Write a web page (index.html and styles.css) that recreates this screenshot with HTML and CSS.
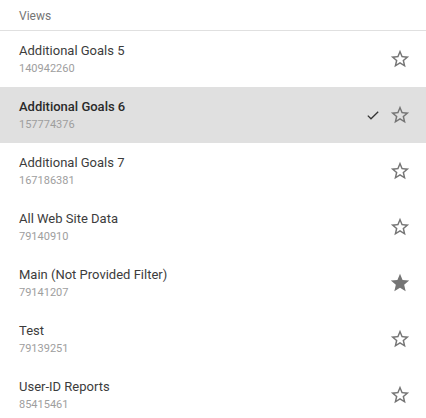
FILE: index.html
```html
<!DOCTYPE html>
<html>
<head>
<meta charset="utf-8">
<link rel="stylesheet" href="styles.css">
</head>
<body>
<div class="panel">
  <div class="header">Views</div>
  <ul class="list">
    <li class="row">
      <div class="text"><div class="title">Additional Goals 5</div><div class="sub">140942260</div></div>
      <svg class="star" viewBox="0 0 24 24"><path d="M22 9.24l-7.19-.62L12 2 9.19 8.63 2 9.24l5.46 4.73L5.82 21 12 17.27 18.18 21l-1.63-7.03L22 9.24zM12 15.4l-3.76 2.27 1-4.28-3.32-2.88 4.38-.38L12 6.1l1.71 4.04 4.38.38-3.32 2.880 1 4.28L12 15.4z"/></svg>
    </li>
    <li class="row selected">
      <div class="text"><div class="title">Additional Goals 6</div><div class="sub">157774376</div></div>
      <svg class="check" viewBox="0 0 12 9"><path d="M0.8 4.6 L4 7.8 L11.2 0.8" fill="none" stroke="#333" stroke-width="1.3"/></svg>
      <svg class="star" viewBox="0 0 24 24"><path d="M22 9.24l-7.19-.62L12 2 9.19 8.63 2 9.24l5.46 4.73L5.82 21 12 17.27 18.18 21l-1.63-7.03L22 9.24zM12 15.4l-3.76 2.27 1-4.28-3.32-2.88 4.38-.38L12 6.1l1.71 4.04 4.38.38-3.32 2.88 1 4.28L12 15.4z"/></svg>
    </li>
    <li class="row">
      <div class="text"><div class="title">Additional Goals 7</div><div class="sub">167186381</div></div>
      <svg class="star" viewBox="0 0 24 24"><path d="M22 9.24l-7.19-.62L12 2 9.19 8.63 2 9.24l5.46 4.73L5.82 21 12 17.27 18.18 21l-1.63-7.03L22 9.24zM12 15.4l-3.76 2.27 1-4.28-3.32-2.88 4.38-.38L12 6.1l1.71 4.04 4.38.38-3.32 2.88 1 4.28L12 15.4z"/></svg>
    </li>
    <li class="row">
      <div class="text"><div class="title">All Web Site Data</div><div class="sub">79140910</div></div>
      <svg class="star" viewBox="0 0 24 24"><path d="M22 9.24l-7.19-.62L12 2 9.19 8.63 2 9.24l5.46 4.73L5.82 21 12 17.27 18.18 21l-1.63-7.03L22 9.24zM12 15.4l-3.76 2.27 1-4.28-3.32-2.88 4.38-.38L12 6.1l1.71 4.04 4.38.38-3.32 2.88 1 4.28L12 15.4z"/></svg>
    </li>
    <li class="row">
      <div class="text"><div class="title">Main (Not Provided Filter)</div><div class="sub">79141207</div></div>
      <svg class="star" viewBox="0 0 24 24"><path d="M12 17.27L18.18 21l-1.64-7.03L22 9.24l-7.19-.61L12 2 9.19 8.63 2 9.24l5.46 4.73L5.820 21z"/></svg>
    </li>
    <li class="row">
      <div class="text"><div class="title">Test</div><div class="sub">79139251</div></div>
      <svg class="star" viewBox="0 0 24 24"><path d="M22 9.24l-7.19-.62L12 2 9.19 8.63 2 9.24l5.46 4.73L5.82 21 12 17.27 18.18 21l-1.63-7.03L22 9.24zM12 15.4l-3.76 2.27 1-4.28-3.32-2.88 4.38-.38L12 6.1l1.71 4.04 4.38.38-3.32 2.88 1 4.28L12 15.4z"/></svg>
    </li>
    <li class="row">
      <div class="text"><div class="title">User-ID Reports</div><div class="sub">85415461</div></div>
      <svg class="star" viewBox="0 0 24 24"><path d="M22 9.24l-7.19-.62L12 2 9.19 8.63 2 9.24l5.46 4.73L5.82 21 12 17.27 18.18 21l-1.63-7.03L22 9.24zM12 15.4l-3.76 2.27 1-4.28-3.32-2.88 4.38-.38L12 6.1l1.71 4.04 4.38.38-3.32 2.88 1 4.28L12 15.4z"/></svg>
    </li>
  </ul>
</div>
</body>
</html>
```

FILE: styles.css
```css
html, body {
  margin: 0;
  padding: 0;
  background: #fff;
}
body {
  font-family: Roboto, "Liberation Sans", sans-serif;
  overflow: hidden;
}
.panel {
  width: 426px;
}
.header {
  height: 16px;
  padding: 8px 19px 6px;
  font-size: 12px;
  line-height: 16px;
  color: #757575;
  border-bottom: 1px solid #e0e0e0;
}
.list {
  list-style: none;
  margin: 0;
  padding: 0;
}
.row {
  display: flex;
  align-items: center;
  height: 56px;
  padding: 0 15px 0 19px;
  box-sizing: border-box;
}
.row.selected {
  background: #e0e0e0;
}
.text {
  flex: 1;
}
.title {
  font-size: 13px;
  line-height: 20px;
  color: #3c3c3c;
}
.selected .title {
  font-weight: 500;
  color: #2a2a2a;
}
.sub {
  font-size: 11px;
  line-height: 16px;
  color: #9e9e9e;
}
.check {
  width: 12px;
  height: 9px;
  margin-right: 10px;
}
.star {
  width: 22px;
  height: 22px;
  fill: #757575;
}
```
